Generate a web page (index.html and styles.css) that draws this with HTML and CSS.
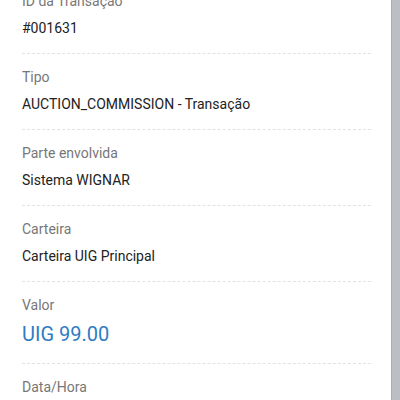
FILE: index.html
```html
<!DOCTYPE html>
<html>
<head>
  <meta charset="utf-8">
  <title>Detalhes da Transação</title>
  <link rel="stylesheet" href="styles.css">
</head>
<body>
  <div class="screen">
    <div class="details">
      <div class="row first">
        <div class="label">ID da Transação</div>
        <div class="value">#001631</div>
      </div>
      <div class="row">
        <div class="label">Tipo</div>
        <div class="value">AUCTION_COMMISSION - Transação</div>
      </div>
      <div class="row">
        <div class="label">Parte envolvida</div>
        <div class="value">Sistema WIGNAR</div>
      </div>
      <div class="row">
        <div class="label">Carteira</div>
        <div class="value">Carteira UIG Principal</div>
      </div>
      <div class="row">
        <div class="label">Valor</div>
        <div class="value amount">UIG 99.00</div>
      </div>
      <div class="row">
        <div class="label">Data/Hora</div>
        <div class="value">&nbsp;</div>
      </div>
    </div>
    <div class="scrollbar"></div>
  </div>
</body>
</html>
```

FILE: styles.css
```css
/* Page base */
body {
  margin: 0;
  background: #fff;
  font-family: Roboto, "Noto Sans", Arial, sans-serif;
  overflow: hidden;
}

.screen {
  display: flex;
  height: 400px;
  overflow: hidden;
}

/* List of detail rows (page is scrolled a little) */
.details {
  flex: 1;
  padding: 0 20px 0 22px;
  margin-top: -22px;
}

.row {
  padding: 13px 0 15px;
  border-bottom: 1px dashed #e2e2e2;
}

.label {
  font-size: 14px;
  line-height: 20px;
  color: #777;
}

.value {
  margin-top: 7px;
  font-size: 14px;
  line-height: 20px;
  color: #222;
}

/* Amount is bigger and blue */
.value.amount {
  margin-top: 5px;
  font-size: 20px;
  line-height: 28px;
  color: #2f7bc4;
}

/* Right-side grey strip */
.scrollbar {
  width: 8px;
  background: #bcbec6;
  border-left: 1px solid #a9acb5;
}
```
